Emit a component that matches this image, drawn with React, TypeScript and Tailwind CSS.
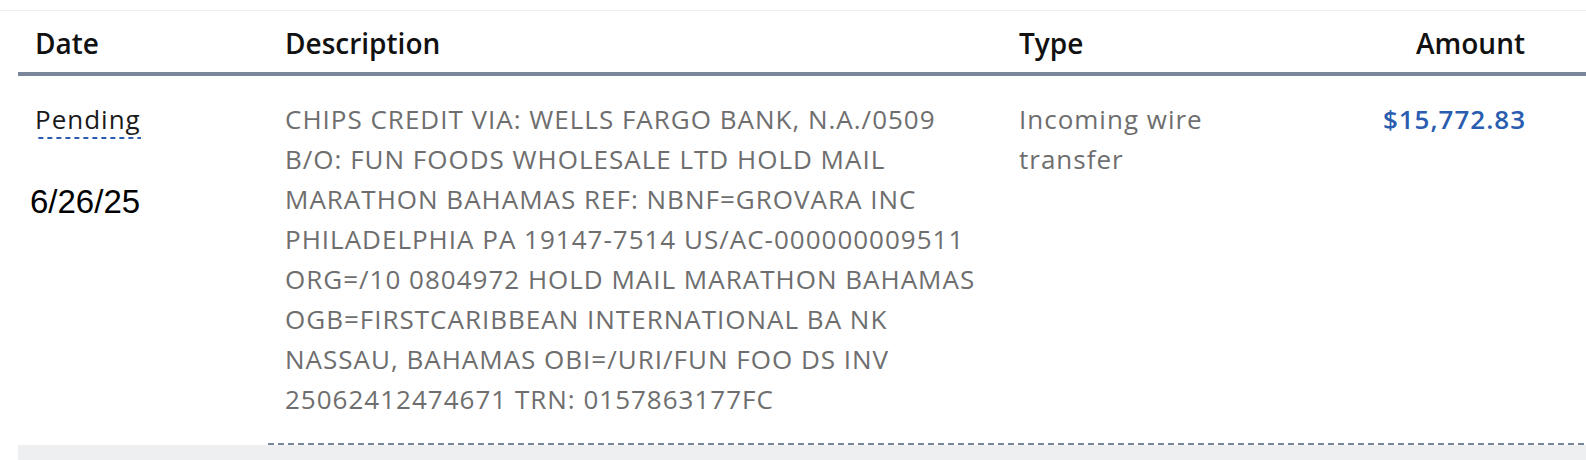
import React from 'react'

const descLines = [
	'CHIPS CREDIT VIA: WELLS FARGO BANK, N.A./0509',
	'B/O: FUN FOODS WHOLESALE LTD HOLD MAIL',
	'MARATHON BAHAMAS REF: NBNF=GROVARA INC',
	'PHILADELPHIA PA 19147-7514 US/AC-000000009511',
	'ORG=/10 0804972 HOLD MAIL MARATHON BAHAMAS',
	'OGB=FIRSTCARIBBEAN INTERNATIONAL BA NK',
	'NASSAU, BAHAMAS OBI=/URI/FUN FOO DS INV',
	'25062412474671 TRN: 0157863177FC',
]

const App = () => {
	return (
		<div className="min-h-screen w-full overflow-hidden bg-white pt-[10px] font-['Open_Sans',sans-serif]">
			<div className="border-t border-[#efefef]">
				<div className="ml-[18px]">
					{/* header */}
					<div className="flex h-[65px] border-b-4 border-[#7a8699] pt-[14px] text-[28px] leading-[36px] font-semibold text-[#111]">
						<div className="w-[250px] pl-[17px]">Date</div>
						<div className="w-[734px] pl-[17px]">Description</div>
						<div className="w-[260px] pl-[17px]">Type</div>
						<div className="flex-1 pr-[61px] text-right">Amount</div>
					</div>

					{/* row */}
					<div className="flex pt-[23px] pb-[24px] text-[26px] leading-[40px] tracking-[1px]">
						<div className="w-[250px] pl-[17px]">
							<span className="inline-block text-[#1a1a1a] bg-[linear-gradient(to_right,#2a5db0_5px,transparent_5px)] bg-[length:9px_2px] bg-bottom bg-repeat-x">
								Pending
							</span>
							<div className="mt-[46px] -ml-[5px] font-['Liberation_Sans',Arial,sans-serif] text-[33px] leading-[33px] tracking-normal text-black">
								6/26/25
							</div>
						</div>
						<div className="w-[734px] pl-[17px] text-[#6e6e6e]">
							{descLines.map((l) => (
								<div key={l} className="whitespace-nowrap">{l}</div>
							))}
						</div>
						<div className="w-[260px] pl-[17px] text-[#6e6e6e]">
							<div>Incoming wire</div>
							<div>transfer</div>
						</div>
						<div className="flex-1 pr-[60px] text-right font-semibold text-[#2a5db0]">$15,772.83</div>
					</div>

					<div className="ml-[250px] h-[2px] bg-[linear-gradient(to_right,#7a8699_6px,transparent_6px)] bg-[length:10px_2px] bg-repeat-x"></div>
					<div className="h-[20px] bg-[#eeeff1]"></div>
				</div>
			</div>
		</div>
	)
}

export default App
